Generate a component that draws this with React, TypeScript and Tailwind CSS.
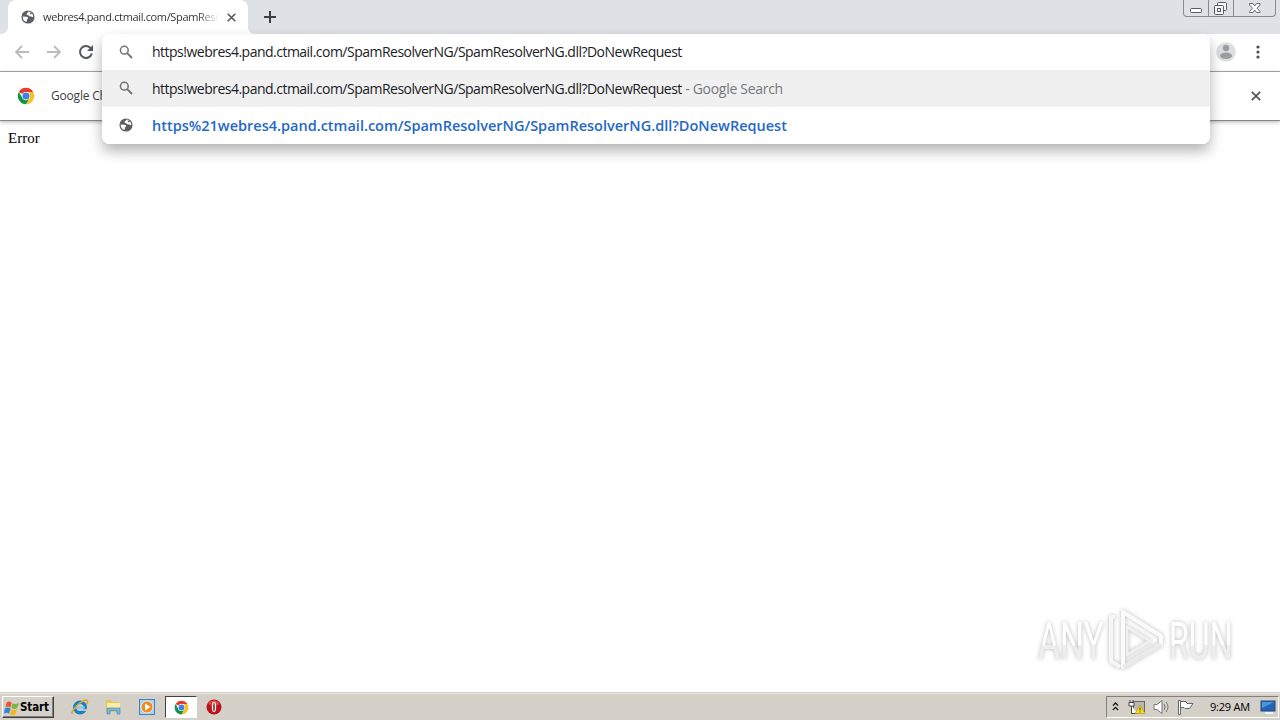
import React from 'react';

interface IconProps {
  className?: string;
}

interface Suggestion {
  id: string;
  icon: 'search' | 'globe';
  text: string;
  suffix?: string;
  active?: boolean;
  link?: boolean;
}

const query = 'https!webres4.pand.ctmail.com/SpamResolverNG/SpamResolverNG.dll?DoNewRequest';

const suggestions: Suggestion[] = [
  { id: 'search', icon: 'search', text: query, suffix: ' - Google Search', active: true },
  {
    id: 'url',
    icon: 'globe',
    text: 'https%21webres4.pand.ctmail.com/SpamResolverNG/SpamResolverNG.dll?DoNewRequest',
    link: true
  }
];

const GlobeIcon: React.FC<IconProps> = ({ className }) => (
  <svg viewBox="0 0 16 16" className={className}>
    <circle cx="8" cy="8" r="7.5" fill="#5b5e62" />
    <path d="M8.6 1.8 C8.3 3.6 6.6 3.2 6.4 4.6 C6.2 6 8.2 5.4 9 6.6 C9.8 7.9 10.8 7.2 12.2 7.6 L14 8.4 A6 6 0 0 0 8.6 1.8Z" fill="#fff" />
    <path d="M2 7.4 L6.2 7.6 C8.2 7.8 8.6 9.4 7.6 10 C6.4 10.6 7.4 12.2 6 13.6 A6 6 0 0 1 2 7.4Z" fill="#fff" />
    <path d="M10 2.4 L12.6 4.4 L11.4 5.2 L10.2 4.4Z" fill="#5b5e62" />
  </svg>
);

const SearchIcon: React.FC<IconProps> = ({ className }) => (
  <svg viewBox="0 0 16 16" className={className} fill="none" stroke="#6e7175" strokeWidth="1.5">
    <circle cx="6.3" cy="6.2" r="3.9" />
    <path d="M9.2 9.2 L14 14" strokeWidth="1.8" />
  </svg>
);

const ChromeIcon: React.FC<IconProps> = ({ className }) => (
  <svg viewBox="0 0 48 48" className={className}>
    <circle cx="24" cy="24" r="22" fill="#fff" />
    <path d="M24 2 A22 22 0 0 1 43 13 H24 A11 11 0 0 0 14.5 18.5 L5 13 A22 22 0 0 1 24 2Z" fill="#e33b2e" />
    <path d="M43 13 A22 22 0 0 1 24 46 L33.5 29.5 A11 11 0 0 0 33.5 18.5 L30 13Z" fill="#fbc116" />
    <path d="M5 13 A22 22 0 0 0 24 46 L33.5 29.5 A11 11 0 0 1 14.5 29.5Z" fill="#159447" />
    <circle cx="24" cy="24" r="11" fill="#fff" />
    <circle cx="24" cy="24" r="9.5" fill="#3f83e8" />
  </svg>
);

const CloseIcon: React.FC<IconProps> = ({ className }) => (
  <svg viewBox="0 0 10 10" className={className} stroke="#56595d" strokeWidth="1.8">
    <path d="M0.8 0.8 L9.2 9.2 M9.2 0.8 L0.8 9.2" />
  </svg>
);

const WindowControls = () => (
  <div className="absolute right-1 top-0 flex h-[17px] w-[93px] rounded-b border border-t-0 border-[#858b96]">
    <div className="w-[25px] border-r border-[#858b96]">
      <svg viewBox="0 0 24 16" className="h-4 w-6">
        <rect x="6.5" y="8.5" width="11" height="4" rx="1" fill="#fff" stroke="#565b66" />
      </svg>
    </div>
    <div className="w-[25px] border-r border-[#858b96]">
      <svg viewBox="0 0 24 16" className="h-4 w-6" fill="#f4f5f7" stroke="#565b66">
        <rect x="8.5" y="2.5" width="9" height="8" rx="1" />
        <rect x="5.5" y="5.5" width="9" height="9" rx="1" />
        <rect x="8.5" y="8.5" width="3" height="3" />
      </svg>
    </div>
    <div className="flex-1">
      <svg viewBox="0 0 42 16" className="h-4 w-[42px]">
        <path
          d="M15.5 3.5 H19 L20.7 6 L22.5 3.5 H26 V5 L23 8.2 L26 11.5 V12.5 H22.5 L20.7 10 L19 12.5 H15.5 V11.5 L18.5 8.2 L15.5 5Z"
          fill="#fff"
          stroke="#666b75"
        />
      </svg>
    </div>
  </div>
);

const TabStrip = () => (
  <div className="relative flex h-[34px] bg-[#dee1e6] pl-2">
    <div className="relative flex h-[34px] w-60 items-center rounded-t-lg bg-white pl-[13px]">
      <GlobeIcon className="h-[14px] w-[14px] shrink-0" />
      <div className="ml-2 w-[176px] whitespace-nowrap bg-gradient-to-r from-[#2c2f33] from-88% to-transparent bg-clip-text text-[11px] leading-4 tracking-[-0.35px] text-transparent">
        webres4.pand.ctmail.com/SpamReso
      </div>
      <CloseIcon className="ml-2 h-[9px] w-[9px] shrink-0" />
      <div className="absolute -left-2 bottom-0 h-2 w-2 bg-[radial-gradient(circle_at_top_left,#dee1e6_8px,#fff_8.5px)]" />
      <div className="absolute -right-2 bottom-0 h-2 w-2 bg-[radial-gradient(circle_at_top_right,#dee1e6_8px,#fff_8.5px)]" />
    </div>
    <svg viewBox="0 0 12 12" className="ml-4 mt-[11px] h-3 w-3" stroke="#3c4043" strokeWidth="2">
      <path d="M6 0 V12 M0 6 H12" />
    </svg>
    <WindowControls />
  </div>
);

const Toolbar = () => (
  <div className="flex h-[38px] items-center border-b border-[#a9abad] bg-white pb-px pl-[14px]">
    <svg viewBox="0 0 16 14" className="h-[14px] w-4" fill="none" stroke="#b9bbbd" strokeWidth="1.8">
      <path d="M15 7 H2 M8 1 L2 7 L8 13" />
    </svg>
    <svg viewBox="0 0 16 14" className="ml-4 h-[14px] w-4" fill="none" stroke="#b9bbbd" strokeWidth="1.8">
      <path d="M1 7 H14 M8 1 L14 7 L8 13" />
    </svg>
    <svg viewBox="0 0 16 16" className="ml-4 h-4 w-4" fill="none" stroke="#54575b" strokeWidth="2">
      <path d="M13 4.6 A6 6 0 1 0 13.8 9.6" />
      <path d="M15 1 V7 H9Z" fill="#54575b" stroke="none" />
    </svg>
    <svg viewBox="0 0 20 20" className="ml-auto h-5 w-5">
      <circle cx="10" cy="10" r="9.8" fill="#dcdee0" />
      <circle cx="10" cy="6" r="3.2" fill="#9b9da0" />
      <ellipse cx="10" cy="13.8" rx="6" ry="3.2" fill="#9b9da0" />
    </svg>
    <svg viewBox="0 0 4 14" className="ml-5 mr-5 h-[14px] w-1" fill="#4d5054">
      <circle cx="2" cy="2" r="1.6" />
      <circle cx="2" cy="7" r="1.6" />
      <circle cx="2" cy="12" r="1.6" />
    </svg>
  </div>
);

const Omnibox = () => (
  <div className="absolute left-[102px] top-[34px] h-[110px] w-[1108px] overflow-hidden rounded-lg bg-white text-[14px] leading-5 text-[#202124]">
    <div className="flex h-9 items-center pl-4">
      <SearchIcon className="h-4 w-4" />
      <span className="ml-[18px] whitespace-pre tracking-[-0.51px]">{query}</span>
    </div>
    {suggestions.map((item) => (
      <div
        key={item.id}
        className={`flex h-[37px] items-center pl-4 ${item.active ? 'bg-[#f0f0f0]' : 'bg-white'}`}
      >
        {item.icon === 'search' ? (
          <SearchIcon className="mb-px h-4 w-4" />
        ) : (
          <GlobeIcon className="mx-px mb-0.5 h-[14px] w-[14px]" />
        )}
        <span
          className={`ml-[18px] whitespace-pre ${
            item.link ? 'text-[14.5px] font-semibold text-[#2568c9]' : 'tracking-[-0.51px]'
          }`}
        >
          {item.text}
          {item.suffix && <span className="tracking-[-0.3px] text-[#75787c]">{item.suffix}</span>}
        </span>
      </div>
    ))}
  </div>
);

const Watermark = () => (
  <div className="absolute bottom-[48px] right-[46px] flex h-16 w-[196px] items-center font-['Roboto',sans-serif] text-[51px] leading-[60px] text-[#f3f3f3] drop-shadow-[0_0_2px_rgba(0,0,0,0.28)]">
    <div className="w-[70px] pt-1">
      <span className="block w-max origin-left scale-x-[0.66] bg-gradient-to-b from-white from-55% to-[#eeeeee] to-55% bg-clip-text text-transparent">
        ANY
      </span>
    </div>
    <svg viewBox="0 -1 56 64" className="h-16 w-14 shrink-0" fill="none" strokeLinejoin="round">
      <path d="M7 8 H3 V52 L12 58" stroke="#f6f6f6" strokeWidth="4" />
      <path d="M15 3 V58 L53 35 V27Z" stroke="#fbfbfb" strokeWidth="4" />
      <path d="M19 18 V46 L42 32Z" stroke="#f0f0f0" strokeWidth="3" />
      <path d="M15 58 L53 35" stroke="#eaeaea" strokeWidth="4" />
    </svg>
    <div className="ml-[5px] w-[64px] pt-1">
      <span className="block w-max origin-left scale-x-[0.63] bg-gradient-to-b from-white from-55% to-[#eeeeee] to-55% bg-clip-text text-transparent">
        RUN
      </span>
    </div>
  </div>
);

const Taskbar = () => (
  <div className="flex h-[27px] shrink-0 items-center border-t border-[#e8e5df] bg-[#d4d0c8] text-black shadow-[0_-1px_0_#d4d0c8]">
    <button className="ml-0.5 flex h-[22px] w-[52px] items-center border border-b-[#404040] border-l-white border-r-[#404040] border-t-white pt-px font-bold shadow-[inset_-1px_-1px_0_#808080]">
      <svg viewBox="0 0 18 16" className="h-4 w-[17px] shrink-0">
        <path d="M4 2 Q7 0 9 2.5 L8 7.5 Q5 5.5 2.5 7.5Z" fill="#e95525" />
        <path d="M10 3 Q13 5 17 2.5 L15 8 Q12 10 9 8Z" fill="#79b43b" />
        <path d="M2 8.5 Q5 6.5 8 8.5 L6.5 14 Q4 12 1 14Z" fill="#3585d0" />
        <path d="M9 9 Q12 11 15 9 L13 14.5 Q10 17 7.5 14.5Z" fill="#f4b527" />
      </svg>
      <span className="font-['DejaVu_Sans_Condensed','DejaVu_Sans',sans-serif] text-[11.5px] tracking-[-0.1px]">Start</span>
    </button>
    <svg viewBox="0 0 18 18" className="ml-[17px] h-[18px] w-[18px]" fill="none">
      <circle cx="9" cy="9.5" r="5.3" stroke="#1581c9" strokeWidth="3.4" />
      <path d="M4 9.5 H14" stroke="#75c7ef" strokeWidth="2" />
      <path d="M11 12 H16" stroke="#d4d0c8" strokeWidth="1.6" />
      <path d="M2 15 C-2 18 5 5 15 2 Q18 2 15.5 6" stroke="#dfa62b" strokeWidth="1.5" />
    </svg>
    <svg viewBox="0 0 18 18" className="ml-[15px] h-[18px] w-[18px]">
      <path d="M2 2 H7 L8 4 H15 V14 H2Z" fill="#e8c45e" />
      <path d="M3 5 H16 V12 H3Z" fill="#faedaa" />
      <path d="M3 16 V10 H16 V16 H13 V12.5 H6 V16Z" fill="#79b9da" stroke="#478eb8" strokeWidth="0.7" />
    </svg>
    <svg viewBox="0 0 18 18" className="ml-4 h-[18px] w-[18px]">
      <rect x="1.5" y="1.5" width="15" height="15" fill="#a7d2f3" stroke="#3d82c3" />
      <circle cx="9" cy="9" r="6" fill="#f28b20" stroke="#fff" strokeWidth="0.7" />
      <path d="M7 5.5 L12.5 9 L7 12.5Z" fill="#fff" />
    </svg>
    <div className="ml-[9px] flex h-[22px] w-[32px] items-center justify-center border border-b-white border-l-[#404040] border-r-white border-t-[#404040] bg-white">
      <ChromeIcon className="h-[15px] w-[15px]" />
    </div>
    <svg viewBox="0 0 16 16" className="ml-[9px] h-4 w-4">
      <circle cx="8" cy="8" r="7.5" fill="#b9141b" />
      <path d="M2 5 A7 7 0 0 1 14 5 Q8 8 2 5Z" fill="#d74744" />
      <ellipse cx="8" cy="8" rx="2.2" ry="5.2" fill="#fff" />
      <ellipse cx="8" cy="8" rx="0.8" ry="4.6" fill="#a30d14" />
    </svg>
    <div className="ml-auto mr-px flex h-[22px] w-[173px] items-center border border-b-white border-l-[#808080] border-r-white border-t-[#808080] pl-[5px]">
      <svg viewBox="0 0 8 10" className="mb-0.5 h-[9px] w-[7px]" fill="none" stroke="#111" strokeWidth="1.5">
        <path d="M1 4 L4 1 L7 4 M1 9 L4 6 L7 9" />
      </svg>
      <svg viewBox="0 0 18 16" className="ml-[9px] h-4 w-[18px]">
        <rect x="5.5" y="2.5" width="11" height="10" fill="#b9b9b4" stroke="#666" />
        <path d="M2 1 V4 M5 1 V4 M1 3.5 H6 V7 H1Z M3.5 7 V14.5 H10" fill="#fff" stroke="#444" />
        <path d="M12 6 L17 14.5 H7Z" fill="#ffdc24" stroke="#b59516" strokeWidth="0.7" />
        <path d="M12 8.5 V11.5 M12 12.5 V13.5" stroke="#333" />
      </svg>
      <svg viewBox="0 0 18 16" className="ml-[7px] h-4 w-[18px]" fill="none" stroke="#77777a">
        <path d="M1 5.5 H4 L9 1.5 V14.5 L4 10.5 H1Z" fill="#fff" />
        <path d="M11 5 Q13 8 11 11 M13 3 Q17 8 13 13" />
      </svg>
      <svg viewBox="0 0 18 16" className="ml-[6px] h-4 w-[18px]" fill="#fff" stroke="#66666a">
        <path d="M1.5 1.5 H3.5 V15.5 H1.5Z" />
        <path d="M3.5 2.5 H9 L10 4.5 H16 L12.5 9.5 H8 L7 8.5 H3.5Z" />
      </svg>
      <span className="ml-[15px] w-[42px] whitespace-nowrap text-[11px] tracking-[-0.2px]">9:29 AM</span>
      <svg viewBox="0 0 16 16" className="ml-[8px] h-4 w-4">
        <rect x="1" y="2" width="14" height="10" fill="#2265b6" stroke="#254b78" />
        <path d="M2 3 H14 L2 9Z" fill="#4e95df" />
        <path d="M5 14 H13" stroke="#eef3f8" strokeWidth="2" />
      </svg>
    </div>
  </div>
);

const App: React.FC = () => {
  return (
    <div className="relative flex h-[720px] w-[1280px] flex-col overflow-hidden bg-white font-['Open_Sans',sans-serif]">
      <TabStrip />
      <Toolbar />
      <div className="flex h-[49px] shrink-0 items-center border-b border-[#85878a] pl-[17px] text-[12px] text-[#3c4043] shadow-[0_1px_4px_rgba(0,0,0,0.3)]">
        <ChromeIcon className="h-[18px] w-[18px]" />
        <span className="ml-4 whitespace-nowrap tracking-[-0.2px]">Google Chrome</span>
        <CloseIcon className="ml-auto mr-[19px] h-[10px] w-[10px]" />
      </div>
      <main className="flex-1 px-2 pt-[7px] font-['Liberation_Serif',serif] text-[15px] leading-5 text-black">Error</main>
      <Taskbar />

      {/* Address bar dropdown, the shadow is a separate layer under the rounded list */}
      <div className="absolute left-[102px] top-[34px] h-[110px] w-[1108px] rounded-lg shadow-[0_7px_14px_rgba(0,0,0,0.3)]" />
      <Omnibox />
      <Watermark />
    </div>
  );
};

export default App;
